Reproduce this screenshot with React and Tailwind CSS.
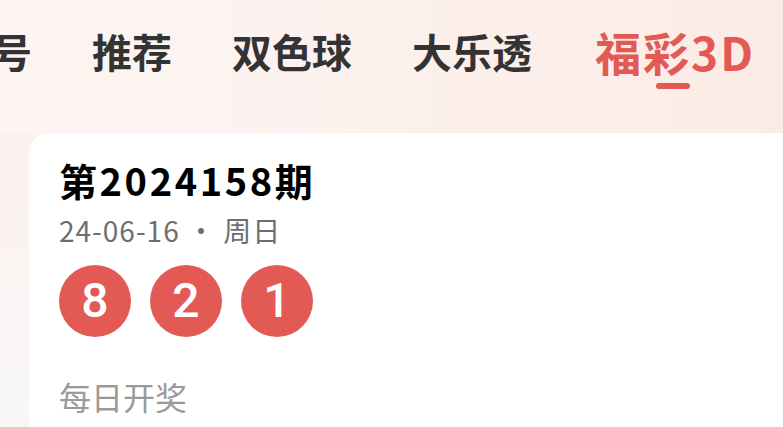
import React from "react";

const tabs = [
  { label: "号", active: false },
  { label: "推荐", active: false },
  { label: "双色球", active: false },
  { label: "大乐透", active: false },
  { label: "福彩3D", active: true },
];

export default function App() {
  return (
    <div className="relative h-[427px] w-full overflow-hidden bg-[linear-gradient(180deg,#fdf2ef_0%,#fcf1ee_30%,#f8f7f7_100%)] font-['Noto_Sans_CJK_SC',sans-serif]">
      <div className="h-[133px] bg-[linear-gradient(90deg,#fdf5f3_0%,#fcf0ec_55%,#fcebe5_100%)]">
        <div className="-ml-[8px] flex items-start gap-[60px] whitespace-nowrap pt-[28px]">
          {tabs.map((t) => (
            <div key={t.label} className="flex flex-col items-center">
              <span
                className={
                  t.active
                    ? "ml-[3px] text-[46px] font-bold leading-[46px] tracking-[2px] text-[#e35a54]"
                    : "text-[40px] font-bold leading-[46px] text-[#333333]"
                }
              >
                {t.label}
              </span>
              <span
                className={
                  t.active
                    ? "mt-[9px] h-[6px] w-[34px] rounded-full bg-[#e35a54]"
                    : "mt-[9px] h-[6px] w-[34px] rounded-full bg-transparent"
                }
              />
            </div>
          ))}
        </div>
      </div>
      <div className="pl-[29px]">
        <div className="h-[300px] rounded-tl-[20px] bg-white pl-[30px] pt-[25px]">
          <div className="text-[38px] font-bold leading-[44px] tracking-[2.6px] text-black">
            第2024158期
          </div>
          <div className="mt-[11px] text-[28px] leading-[34px] tracking-[1px] text-[#6e6e6e]">
            24-06-16 · 周日
          </div>
          <div className="mt-[18px] flex gap-[19px]">
            {["8", "2", "1"].map((n, i) => (
              <div
                key={i}
                className="flex h-[72px] w-[72px] items-center justify-center rounded-full bg-[#e35a55] font-['Roboto',sans-serif] text-[48px] font-medium leading-none text-white"
              >
                {n}
              </div>
            ))}
          </div>
          <div className="mt-[41px] text-[32px] leading-[36px] text-[#9a9a9a]">
            每日开奖
          </div>
        </div>
      </div>
    </div>
  );
}
